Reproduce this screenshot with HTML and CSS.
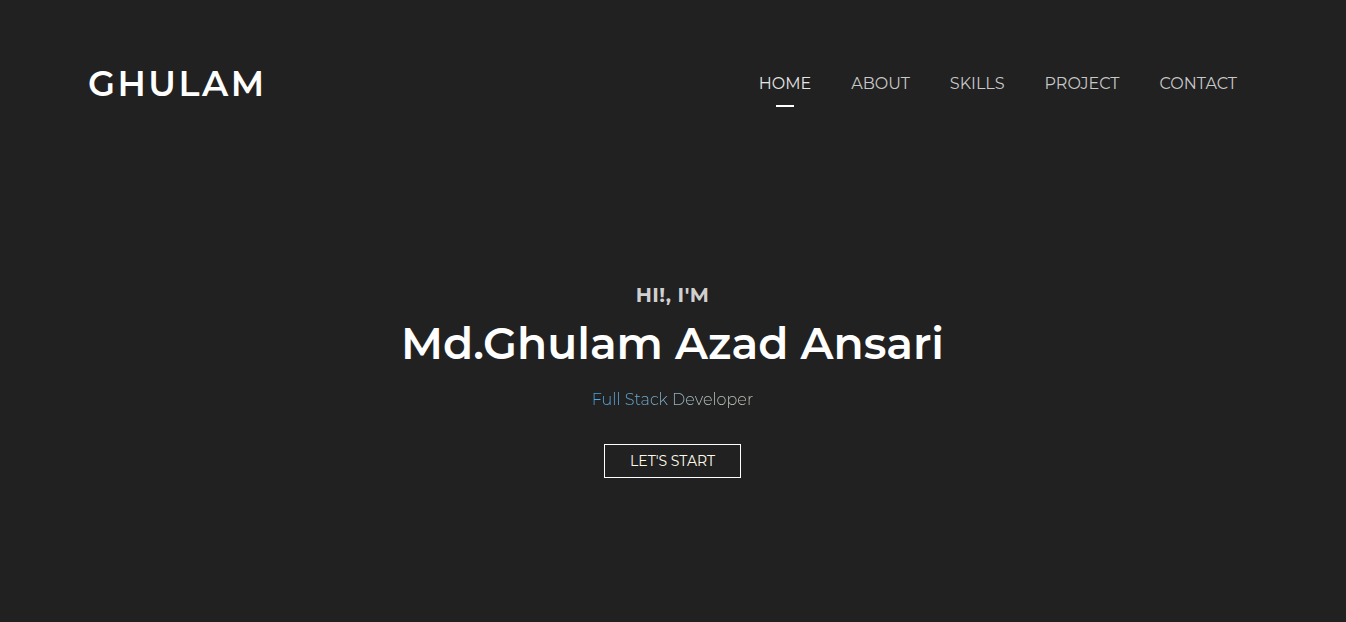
FILE: index.html
```html
<!DOCTYPE html>
<html lang="en">
<head>
<meta charset="utf-8">
<title>Ghulam</title>
<link rel="stylesheet" href="styles.css">
</head>
<body>
<div class="page">
  <header class="header">
    <div class="logo">GHULAM</div>
    <nav class="nav">
      <a class="nav-link active" href="#">HOME</a>
      <a class="nav-link" href="#">ABOUT</a>
      <a class="nav-link" href="#">SKILLS</a>
      <a class="nav-link" href="#">PROJECT</a>
      <a class="nav-link" href="#">CONTACT</a>
    </nav>
  </header>
  <main class="hero">
    <div class="greet">HI!, I'M</div>
    <h1 class="name">Md.Ghulam Azad Ansari</h1>
    <p class="role"><span class="grad">Full Stack Developer</span></p>
    <a class="btn" href="#">LET'S START</a>
  </main>
</div>
</body>
</html>
```

FILE: styles.css
```css
* { box-sizing: border-box; }
html, body { margin: 0; padding: 0; }
body {
  background: #212121;
  font-family: "Montserrat", "Open Sans", "Liberation Sans", sans-serif;
  color: #fff;
  height: 622px;
  overflow: hidden;
}
.page { display: flex; flex-direction: column; height: 100%; }
.header {
  display: flex;
  justify-content: space-between;
  align-items: flex-start;
  padding: 60px 109px 0 88px;
  height: 107px;
}
.logo {
  font-size: 35px;
  font-weight: 600;
  letter-spacing: 2.5px;
  line-height: 48px;
  color: #fff;
}
.nav { display: flex; gap: 40px; padding-top: 13px; }
.nav-link {
  position: relative;
  color: #c8c8c8;
  text-decoration: none;
  font-size: 16px;
  line-height: 22px;
}
.nav-link.active { color: #e6e6e6; }
.nav-link.active::after {
  content: "";
  position: absolute;
  left: 50%;
  transform: translateX(-50%);
  top: 32px;
  width: 18px;
  height: 2px;
  background: #fff;
}
.hero {
  display: flex;
  flex-direction: column;
  align-items: center;
  padding-top: 174px;
  padding-right: 1px;
}
.greet {
  font-size: 20px;
  font-weight: 700;
  color: #d0d0d0;
  line-height: 28px;
  letter-spacing: 0.5px;
}
.name {
  margin: 6px 0 0;
  font-size: 44px;
  font-weight: 600;
  line-height: 56px;
}
.role {
  margin: 18px 0 0;
  font-size: 16px;
  font-weight: 300;
  line-height: 22px;
}
.grad {
  background: linear-gradient(90deg, #4aa8e6 0%, #7fb3d4 40%, #b9c6c4 70%, #c8c8bc 100%);
  -webkit-background-clip: text;
  background-clip: text;
  color: transparent;
}
.btn {
  margin-top: 33px;
  display: inline-flex;
  align-items: center;
  justify-content: center;
  width: 137px;
  height: 34px;
  border: 1px solid #fff;
  color: #fffbea;
  text-decoration: none;
  font-size: 14px;
}
```
